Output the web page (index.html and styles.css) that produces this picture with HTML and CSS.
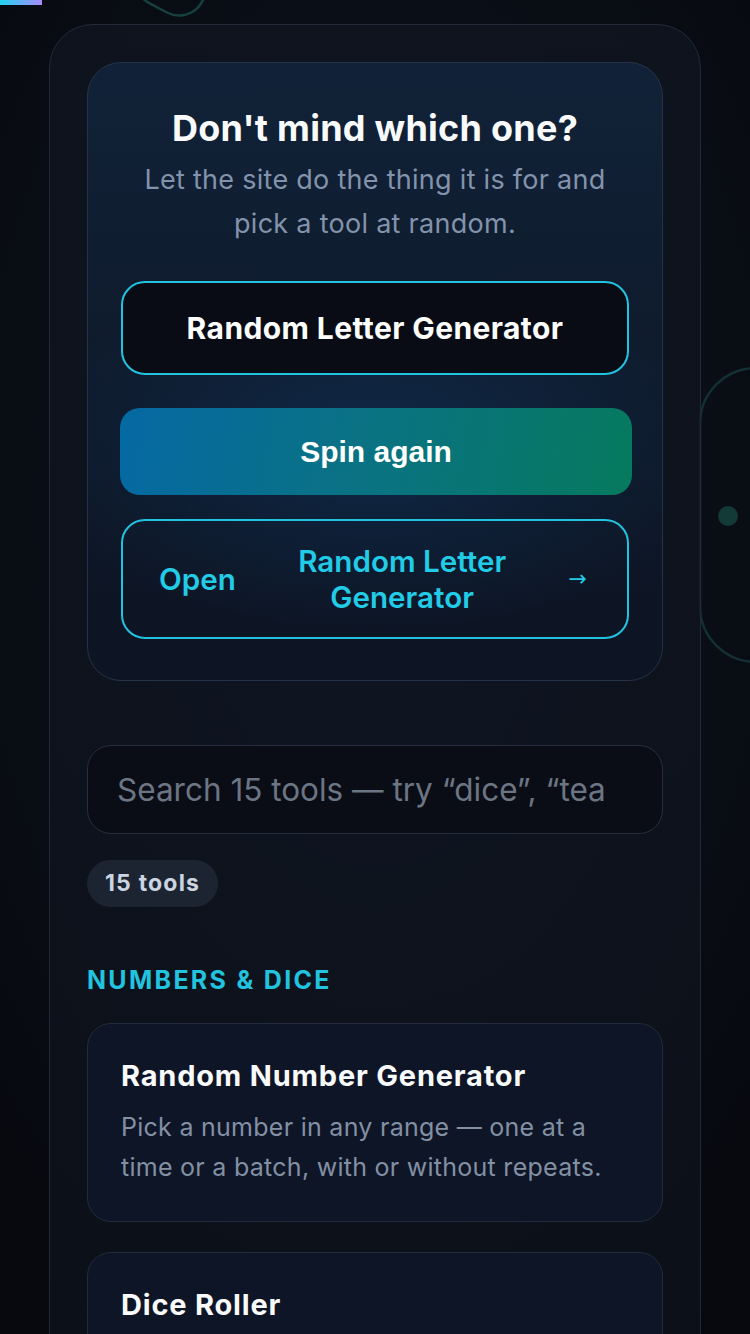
FILE: index.html
```html
<!DOCTYPE html>
<html lang="en">
<head>
<meta charset="utf-8">
<meta name="viewport" content="width=750">
<title>Random tools</title>
<link rel="stylesheet" href="styles.css">
</head>
<body>
<div class="progress"></div>
<svg class="deco deco-top" width="120" height="60" viewBox="0 0 120 60" aria-hidden="true">
  <rect x="24" y="-20" width="72" height="72" rx="26" transform="rotate(28 60 16)" fill="none" stroke="#17403f" stroke-width="2.5"/>
</svg>
<svg class="deco deco-right" width="80" height="310" viewBox="0 0 80 310" aria-hidden="true">
  <rect x="14" y="12" width="140" height="294" rx="56" fill="none" stroke="#142f35" stroke-width="2.5"/>
  <circle cx="42" cy="160" r="10" fill="#143a38"/>
</svg>
<main class="shell">
  <section class="picker">
    <h1 class="picker-title">Don't mind which one?</h1>
    <p class="picker-sub">Let the site do the thing it is for and pick a tool at random.</p>
    <div class="pick-result">Random Letter Generator</div>
    <button class="spin">Spin again</button>
    <a class="open-link" href="#">
      <span>Open</span>
      <span class="open-name">Random Letter Generator</span>
      <span class="arrow">→</span>
    </a>
  </section>

  <input class="search" type="text" placeholder="Search 15 tools — try “dice”, “teams”, “coin”">
  <div class="count">15 tools</div>

  <h2 class="group">NUMBERS &amp; DICE</h2>
  <a class="tool" href="#">
    <h3 class="tool-name">Random Number Generator</h3>
    <p class="tool-desc">Pick a number in any range — one at a time or a batch, with or without repeats.</p>
  </a>
  <a class="tool" href="#">
    <h3 class="tool-name">Dice Roller</h3>
    <p class="tool-desc">Roll any number of dice with any number of sides and see the total.</p>
  </a>
</main>
</body>
</html>
```
FILE: styles.css
```css
* { box-sizing: border-box; font-optical-sizing: none; font-variation-settings: "opsz" 14; }
html, body { margin: 0; padding: 0; }
body {
  background: radial-gradient(ellipse 70% 60% at 50% 35%, #0f1826 0%, #0a0e16 60%, #07090f 100%);
  background-color: #080b12;
  min-height: 1334px;
  font-family: Inter, "Noto Sans", sans-serif;
  color: #f1f5f9;
  overflow: hidden;
  position: relative;
}
.progress {
  position: absolute;
  left: 0; top: 0;
  width: 42px; height: 5px;
  background: linear-gradient(90deg, #22d3ee, #a78bfa);
}
.deco { position: absolute; }
.deco-top { left: 115px; top: -40px; }
.deco-right { left: 686px; top: 356px; }

.shell {
  position: relative;
  margin: 24px 0 0 49px;
  width: 652px;
  min-height: 1400px;
  border: 1px solid #222a39;
  border-radius: 44px;
  background: linear-gradient(180deg, rgba(16,22,33,0.7), rgba(14,20,31,0.6));
  padding: 37px 37px 0;
}
.picker {
  border: 1px solid #263247;
  border-radius: 34px;
  padding: 43px 33px 41px;
  background:
    radial-gradient(ellipse 60% 30% at 50% 62%, rgba(14,52,92,0.55), rgba(14,40,70,0) 100%),
    linear-gradient(180deg, #112238 0%, #0f1b2d 45%, #0d1423 100%);
  text-align: center;
}
.picker-title {
  margin: 0;
  font-size: 36px;
  line-height: 44px;
  font-weight: 700;
  letter-spacing: 0.25px;
  color: #f8fafc;
}
.picker-sub {
  margin: 8px 0 0;
  font-size: 27px;
  line-height: 44px;
  letter-spacing: 0.28px;
  color: #8393ab;
  padding: 0 6px;
}
.pick-result {
  margin-top: 35px;
  height: 94px;
  border: 2px solid #22c3df;
  border-radius: 24px;
  background: #090c15;
  display: flex;
  align-items: center;
  justify-content: center;
  font-size: 30px;
  font-weight: 700;
  letter-spacing: 0.4px;
  color: #ffffff;
}
.spin {
  display: block;
  width: 512px;
  margin: 33px 0 0 -1px;
  height: 87px;
  border: 0;
  border-radius: 20px;
  background: linear-gradient(100deg, #0569a3 0%, #0a7285 45%, #067a5e 100%);
  color: #ffffff;
  font-family: "Liberation Sans", Arial, sans-serif;
  font-size: 30px;
  font-weight: 700;
}
.open-link {
  margin-top: 24px;
  height: 120px;
  border: 2px solid #22c3df;
  border-radius: 24px;
  display: flex;
  align-items: center;
  justify-content: space-between;
  padding: 0 40px 0 36px;
  color: #22cbe6;
  text-decoration: none;
  font-size: 29.6px;
  font-weight: 600;
  line-height: 36px;
}
.open-name { width: 260px; text-align: center; }
.arrow { font-family: "DejaVu Sans", sans-serif; font-size: 22px; font-weight: 400; }

.search {
  display: block;
  width: 576px;
  margin-top: 64px;
  height: 89px;
  border: 1px solid #262f3f;
  border-radius: 24px;
  background: #0a0d16;
  padding: 0 57px 0 29px;
  font-family: Inter, "Noto Sans", sans-serif;
  font-size: 31.5px;
  color: #e2e8f0;
  outline: none;
}
.search::placeholder { color: #6c7584; }
.count {
  display: inline-block;
  margin-top: 26px;
  height: 47px;
  line-height: 47px;
  padding: 0 18px;
  border-radius: 24px;
  background: #1d2431;
  color: #cbd5e1;
  font-size: 23px;
  font-weight: 700;
  letter-spacing: 1.2px;
}
.group {
  margin: 54px 0 0;
  font-size: 25px;
  line-height: 38px;
  font-weight: 700;
  letter-spacing: 2.3px;
  color: #22c3df;
}
.tool {
  display: block;
  margin-top: 24px;
  border: 1px solid #222b3b;
  border-radius: 24px;
  background: #0e1526;
  padding: 33px 33px 34px;
  text-decoration: none;
}
.tool + .tool { margin-top: 30px; }
.tool-name {
  margin: 0;
  font-size: 29px;
  line-height: 38px;
  font-weight: 700;
  letter-spacing: 0.8px;
  color: #f8fafc;
}
.tool-desc {
  margin: 12px 0 0;
  font-size: 25px;
  line-height: 40px;
  letter-spacing: 0.27px;
  color: #8390a4;
}
```
